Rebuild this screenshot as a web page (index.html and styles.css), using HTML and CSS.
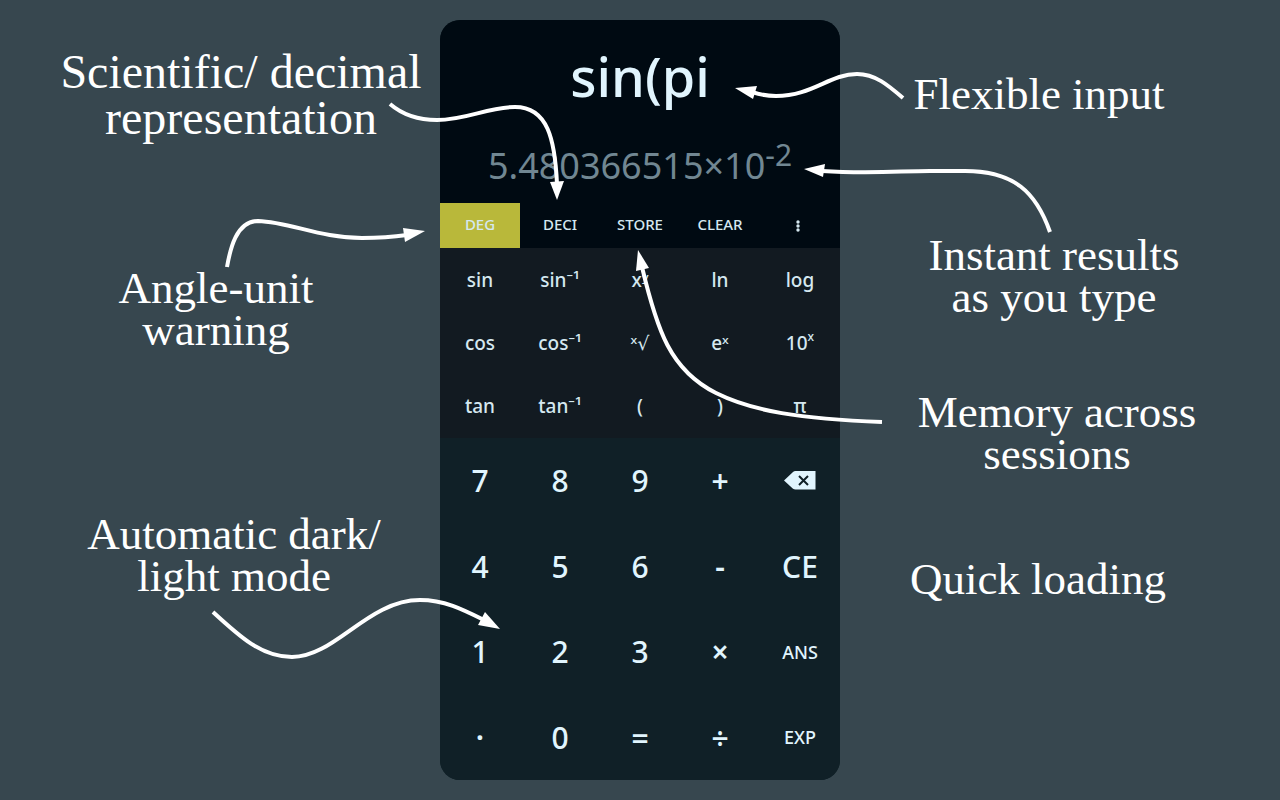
FILE: index.html
```html
<!DOCTYPE html>
<html lang="en">
<head>
<meta charset="utf-8">
<meta name="viewport" content="width=device-width, initial-scale=1">
<title>Calculator</title>
<link rel="stylesheet" href="styles.css">
</head>
<body>
<div class="stage">
  <section class="notes notes-left">
    <p class="note note-large note-format">Scientific/ decimal<br>representation</p>
    <p class="note note-angle">Angle-unit<br>warning</p>
    <p class="note note-theme">Automatic dark/<br>light mode</p>
  </section>

  <main class="calculator">
    <div class="display">
      <output class="expression">sin(pi</output>
      <output class="result">5.480366515×10<sup>-2</sup></output>
    </div>
    <div class="toolbar">
      <button class="warning">DEG</button>
      <button>DECI</button>
      <button>STORE</button>
      <button>CLEAR</button>
      <button class="menu" aria-label="More"><svg class="more" viewBox="0 0 4 12"><circle cx="2" cy="2" r="1.700"/><circle cx="2" cy="6" r="1.700"/><circle cx="2" cy="10" r="1.700"/></svg></button>
    </div>
    <div class="functions">
      <button>sin</button>
      <button>sin⁻¹</button>
      <button>xʸ</button>
      <button>ln</button>
      <button>log</button>
      <button>cos</button>
      <button>cos⁻¹</button>
      <button><span>ˣ<span class="radical">√</span></span></button>
      <button>eˣ</button>
      <button><span>10<sup>x</sup></span></button>
      <button>tan</button>
      <button>tan⁻¹</button>
      <button>(</button>
      <button>)</button>
      <button>π</button>
    </div>
    <div class="keypad">
      <button>7</button>
      <button>8</button>
      <button>9</button>
      <button class="operator">+</button>
      <button aria-label="Backspace"><svg class="backspace" viewBox="0 0 32 19"><path fill="currentColor" d="M0 9.500 9 1Q10 0 11.500 0H31.500V18.500H11.500Q10 18.500 9 17.800Z"/><path fill="none" stroke="#102027" stroke-width="2" d="m15 5 9 9m0-9-9 9"/></svg></button>
      <button>4</button>
      <button>5</button>
      <button>6</button>
      <button class="operator">-</button>
      <button>CE</button>
      <button>1</button>
      <button>2</button>
      <button>3</button>
      <button class="operator">×</button>
      <button class="word">ANS</button>
      <button class="operator">·</button>
      <button>0</button>
      <button class="operator">=</button>
      <button class="operator">÷</button>
      <button class="word">EXP</button>
    </div>
  </main>

  <section class="notes notes-right">
    <p class="note note-input">Flexible input</p>
    <p class="note note-instant">Instant results<br>as you type</p>
    <p class="note note-memory">Memory across<br>sessions</p>
    <p class="note note-loading">Quick loading</p>
  </section>

  <svg class="arrows" viewBox="0 0 1280 800" aria-hidden="true">
    <g class="lines">
      <path d="M390 104C404 116 419 120 437 120C466 120 488 107 515 107C548 107 555 140 557 184"/>
      <path d="M227 267C230 250 236 221 258 221C290 222 320 238 362 238C380 238 393 237 407 235"/>
      <path d="M213 612C240 637 262 657 292 657C335 657 368 600 420 600C444 600 462 609 484 620"/>
      <path d="M903 98C888 85 875 74 857 74C830 74 812 96 776 96C768 96 761 95 752 92"/>
      <path d="M1050 232C1036 192 1014 171 965 171L930 171C900 171 870 174 822 171"/>
      <path d="M882 422C800 419 752 411 716 393C670 370 657 330 642 267"/>
    </g>
    <g class="heads">
      <path d="M550 182 564 181 557 200Z"/>
      <path d="M403 228 425 231 405 242Z"/>
      <path d="M485 612 500 629 478 625Z"/>
      <path d="M735 88 757 86 753 99Z"/>
      <path d="M804 169 825 164 823 177Z"/>
      <path d="M638 250 636 271 649 268Z"/>
    </g>
  </svg>
</div>
</body>
</html>
```

FILE: styles.css
```css
* {
  box-sizing: border-box;
}

body {
  margin: 0;
  background: #37474f;
}

.stage {
  position: relative;
  display: grid;
  grid-template-columns: 1fr 400px 1fr;
  min-height: 100vh;
  overflow: hidden;
}

.notes {
  display: flex;
  flex-direction: column;
  color: #fff;
  font-family: "Liberation Serif", serif;
  font-size: 45px;
  line-height: 42px;
  text-align: center;
}

.notes-left {
  padding-top: 49px;
}

.notes-right {
  padding-top: 73px;
}

.note {
  margin: 0;
}

.note-large {
  font-size: 48px;
  line-height: 46px;
}

.note-format {
  padding-left: 42px;
}

.note-angle {
  margin-top: 126px;
  padding-right: 8px;
}

.note-theme {
  margin-top: 162px;
  padding-left: 28px;
}

.note-input {
  padding-right: 42px;
}

.note-instant {
  margin-top: 119px;
  padding-right: 12px;
}

.note-memory {
  margin-top: 73px;
  padding-right: 6px;
}

.note-loading {
  margin-top: 83px;
  padding-right: 44px;
}

.calculator {
  display: flex;
  flex-direction: column;
  margin: 20px 0;
  align-self: start;
  overflow: hidden;
  border-radius: 20px;
  background: #102027;
  color: #e1f5fe;
  font-family: "Noto Sans", sans-serif;
}

.display {
  display: flex;
  flex-direction: column;
  align-items: center;
  min-height: 183px;
  padding-top: 18px;
  background: #000a12;
}

.expression {
  font-size: 54px;
  font-weight: 500;
  line-height: 76px;
}

.result {
  color: #718792;
  font-size: 36px;
  line-height: 60px;
  padding-top: 22px;
}

.result sup {
  font-size: 30px;
  line-height: 0;
}

.toolbar,
.functions,
.keypad {
  display: grid;
  grid-template-columns: repeat(5, 1fr);
  grid-auto-rows: 1fr;
}

.toolbar {
  min-height: 45px;
  background: #000a12;
}

.functions {
  min-height: 190px;
  background: #121a21;
}

.keypad {
  min-height: 342px;
  background: #102027;
}

button {
  display: flex;
  align-items: center;
  justify-content: center;
  padding: 0;
  border: 0;
  background: none;
  color: inherit;
  font-family: inherit;
  font-weight: 500;
  cursor: pointer;
}

.toolbar button {
  padding-bottom: 4px;
  color: #d5e8f0;
  font-size: 15px;
}

.toolbar .warning {
  background: #b9b83a;
}

.toolbar .menu {
  padding: 0 4px 0 0;
}

.functions button {
  color: #d5e8f0;
  font-size: 19px;
}

.functions sup {
  font-size: 12px;
  line-height: 0;
  vertical-align: 9px;
}

.radical {
  font-family: "DejaVu Sans", sans-serif;
}

.keypad button {
  font-size: 30px;
}

.keypad .operator {
  font-weight: 600;
}

.keypad .word {
  font-size: 18px;
}

.more {
  width: 4px;
  height: 12px;
  fill: currentColor;
}

.backspace {
  width: 32px;
  height: 19px;
}

.arrows {
  position: absolute;
  top: 0;
  left: calc(50% - 640px);
  width: 1280px;
  height: 800px;
  pointer-events: none;
}

.lines {
  fill: none;
  stroke: #fff;
  stroke-width: 4;
}

.heads {
  fill: #fff;
}
```
